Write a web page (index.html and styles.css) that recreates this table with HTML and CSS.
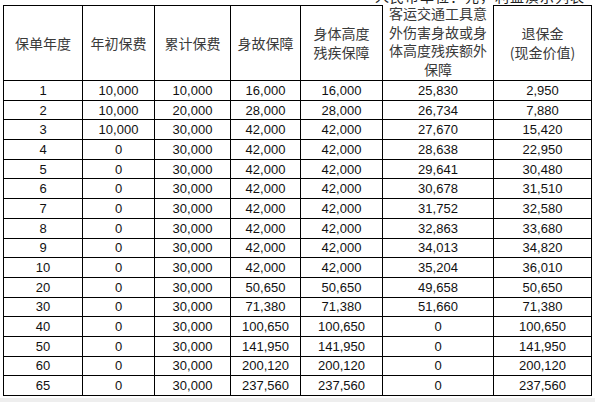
FILE: index.html
```html
<!DOCTYPE html>
<html lang="zh">
<head>
<meta charset="utf-8">
<link rel="stylesheet" href="styles.css">
</head>
<body>
<div class="page">
  <div class="caption"><div class="caption-text">人民币单位：元，利益演示列表</div></div>
  <table class="grid">
    <colgroup>
      <col class="c1"><col class="c2"><col class="c3"><col class="c4"><col class="c5"><col class="c6"><col class="c7">
    </colgroup>
    <thead>
      <tr class="hd">
        <th>保单年度</th>
        <th>年初保费</th>
        <th>累计保费</th>
        <th>身故保障</th>
        <th>身体高度<br>残疾保障</th>
        <th class="tall"><div class="tall-text">客运交通工具意<br>外伤害身故或身<br>体高度残疾额外<br>保障</div></th>
        <th>退保金<br>(现金价值)</th>
      </tr>
    </thead>
    <tbody>
      <tr><td>1</td><td>10,000</td><td>10,000</td><td>16,000</td><td>16,000</td><td>25,830</td><td>2,950</td></tr>
      <tr><td>2</td><td>10,000</td><td>20,000</td><td>28,000</td><td>28,000</td><td>26,734</td><td>7,880</td></tr>
      <tr><td>3</td><td>10,000</td><td>30,000</td><td>42,000</td><td>42,000</td><td>27,670</td><td>15,420</td></tr>
      <tr><td>4</td><td>0</td><td>30,000</td><td>42,000</td><td>42,000</td><td>28,638</td><td>22,950</td></tr>
      <tr><td>5</td><td>0</td><td>30,000</td><td>42,000</td><td>42,000</td><td>29,641</td><td>30,480</td></tr>
      <tr><td>6</td><td>0</td><td>30,000</td><td>42,000</td><td>42,000</td><td>30,678</td><td>31,510</td></tr>
      <tr><td>7</td><td>0</td><td>30,000</td><td>42,000</td><td>42,000</td><td>31,752</td><td>32,580</td></tr>
      <tr><td>8</td><td>0</td><td>30,000</td><td>42,000</td><td>42,000</td><td>32,863</td><td>33,680</td></tr>
      <tr><td>9</td><td>0</td><td>30,000</td><td>42,000</td><td>42,000</td><td>34,013</td><td>34,820</td></tr>
      <tr><td>10</td><td>0</td><td>30,000</td><td>42,000</td><td>42,000</td><td>35,204</td><td>36,010</td></tr>
      <tr><td>20</td><td>0</td><td>30,000</td><td>50,650</td><td>50,650</td><td>49,658</td><td>50,650</td></tr>
      <tr><td>30</td><td>0</td><td>30,000</td><td>71,380</td><td>71,380</td><td>51,660</td><td>71,380</td></tr>
      <tr><td>40</td><td>0</td><td>30,000</td><td>100,650</td><td>100,650</td><td>0</td><td>100,650</td></tr>
      <tr><td>50</td><td>0</td><td>30,000</td><td>141,950</td><td>141,950</td><td>0</td><td>141,950</td></tr>
      <tr><td>60</td><td>0</td><td>30,000</td><td>200,120</td><td>200,120</td><td>0</td><td>200,120</td></tr>
      <tr><td>65</td><td>0</td><td>30,000</td><td>237,560</td><td>237,560</td><td>0</td><td>237,560</td></tr>
    </tbody>
  </table>
  <div class="footer-strip"></div>
</div>
</body>
</html>
```

FILE: styles.css
```css
html, body {
  margin: 0;
  padding: 0;
  background: #ffffff;
}

.page {
  width: 595px;
  height: 402px;
  overflow: hidden;
}

.caption {
  height: 5px;
  overflow: hidden;
  padding-right: 10px;
  text-align: right;
}

.caption-text {
  font-family: "Noto Sans CJK SC", sans-serif;
  font-size: 14px;
  line-height: 14px;
  color: #222;
  margin-top: -11px;
  letter-spacing: 1px;
}

.grid {
  margin-left: 3px;
  width: 588px;
  border-collapse: collapse;
  table-layout: fixed;
  font-family: "Liberation Sans", Arial, sans-serif;
  font-size: 13px;
  color: #111;
}

.c1 { width: 79px; }
.c2 { width: 72px; }
.c3 { width: 76px; }
.c4 { width: 70px; }
.c5 { width: 82px; }
.c6 { width: 111px; }
.c7 { width: 98px; }

.grid th,
.grid td {
  border: 1px solid #000;
  padding: 0;
  text-align: center;
  vertical-align: middle;
  white-space: nowrap;
}

.grid th {
  font-family: "Noto Sans CJK SC", sans-serif;
  font-weight: normal;
  font-size: 14px;
  line-height: 19px;
  color: #3a3a3a;
}

.grid th.tall {
  border-top-color: transparent;
  vertical-align: top;
  height: 74px;
}

.tall-text {
  line-height: 18.5px;
  height: 72px;
  margin-top: -2px;
}

.hd {
  height: 75px;
}

.grid tbody tr {
  height: 19.69px;
}

.grid td {
  line-height: 15px;
}

.footer-strip {
  margin-top: 2px;
  height: 6px;
  background: #eeeeee;
}
```
